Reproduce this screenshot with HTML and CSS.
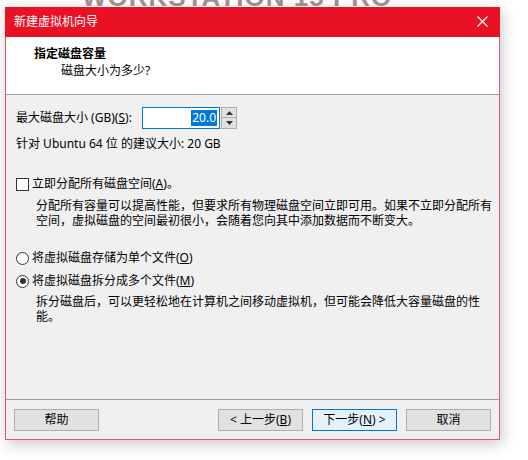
FILE: index.html
```html
<!DOCTYPE html>
<html lang="zh-CN">
<head>
<meta charset="utf-8">
<title>新建虚拟机向导</title>
<link rel="stylesheet" href="styles.css">
</head>
<body>
<div class="bg-mark">WORKSTATION 15 PRO<sup>™</sup></div>
<div class="window">
  <div class="titlebar">
    <span class="title">新建虚拟机向导</span>
    <svg class="close" width="11" height="11" viewBox="0 0 11 11"><path d="M0.5 0.5 L10.5 10.5 M10.5 0.5 L0.5 10.5" stroke="#fff" stroke-width="1.2" fill="none"/></svg>
  </div>
  <div class="header">
    <div class="h-title">指定磁盘容量</div>
    <div class="h-sub">磁盘大小为多少?</div>
  </div>
  <div class="content">
    <div class="size-row">
      <span class="size-label">最大磁盘大小 (GB)(<u>S</u>):</span>
      <div class="spin-input"><span class="sel">20.0</span></div>
      <div class="spin-btns">
        <div class="spin-btn"><svg width="7" height="4" viewBox="0 0 7 4"><path d="M0 4 L3.5 0 L7 4 Z" fill="#333"/></svg></div>
        <div class="spin-btn"><svg width="7" height="4" viewBox="0 0 7 4"><path d="M0 0 L3.5 4 L7 0 Z" fill="#333"/></svg></div>
      </div>
    </div>
    <div class="hint">针对 Ubuntu 64 位 的建议大小: 20 GB</div>
    <div class="check-row"><span class="checkbox"></span><span>立即分配所有磁盘空间(<u>A</u>)。</span></div>
    <p class="desc">分配所有容量可以提高性能，但要求所有物理磁盘空间立即可用。如果不立即分配所有空间，虚拟磁盘的空间最初很小，会随着您向其中添加数据而不断变大。</p>
    <div class="radio-row r1"><span class="radio"></span><span>将虚拟磁盘存储为单个文件(<u>O</u>)</span></div>
    <div class="radio-row r2"><span class="radio checked"></span><span>将虚拟磁盘拆分成多个文件(<u>M</u>)</span></div>
    <p class="desc desc2">拆分磁盘后，可以更轻松地在计算机之间移动虚拟机，但可能会降低大容量磁盘的性能。</p>
  </div>
  <div class="footer">
    <button class="btn">帮助</button>
    <div class="spacer"></div>
    <button class="btn">&lt; 上一步(<u>B</u>)</button>
    <button class="btn primary">下一步(<u>N</u>) &gt;</button>
    <button class="btn">取消</button>
  </div>
</div>
</body>
</html>
```

FILE: styles.css
```css
html, body {
  margin: 0;
  padding: 0;
  background: #ffffff;
}
body {
  position: relative;
  width: 528px;
  height: 460px;
  overflow: hidden;
  font-family: "Noto Sans", "Noto Sans CJK SC", sans-serif;
  font-size: 12px;
  color: #000;
}
.bg-mark {
  position: absolute;
  left: 82px;
  top: -18px;
  font-family: "Liberation Sans", sans-serif;
  font-weight: bold;
  font-size: 26px;
  letter-spacing: 1px;
  color: rgba(105, 70, 70, 0.6);
  white-space: nowrap;
}
.bg-mark sup {
  font-size: 12px;
}
.window {
  position: relative;
  margin: 7px 0 0 5px;
  width: 495px;
  height: 433px;
  box-sizing: border-box;
  border: 1px solid #e0566a;
  border-top: none;
  background: #f0f0f0;
  display: flex;
  flex-direction: column;
  box-shadow: 2px 4px 14px rgba(0, 0, 0, 0.22);
}
.titlebar {
  height: 30px;
  margin: 0 -1px;
  background: #e81224;
  display: flex;
  align-items: center;
  padding: 0 12px 0 9px;
  color: #fff;
  flex-shrink: 0;
}
.title {
  flex: 1;
  line-height: 16px;
  margin-top: -1px;
}
.close {
  display: block;
  margin-top: -1px;
}
.header {
  height: 49px;
  flex-shrink: 0;
  background: #ffffff;
  border-bottom: 1px solid #a0a0a0;
  padding-top: 8px;
  box-sizing: content-box;
}
.h-title {
  font-weight: bold;
  line-height: 18px;
  padding-left: 28px;
}
.h-sub {
  line-height: 16px;
  padding-left: 55px;
}
.content {
  height: 304px;
  flex-shrink: 0;
  box-sizing: border-box;
  padding: 12px 0 0 10px;
}
.size-row {
  display: flex;
  align-items: center;
  height: 22px;
}
.size-label {
  width: 126px;
  line-height: 16px;
}
.spin-input {
  width: 78px;
  height: 22px;
  box-sizing: border-box;
  border: 1px solid #0078d7;
  background: #fff;
  display: flex;
  justify-content: flex-end;
  align-items: center;
  padding-right: 2px;
}
.sel {
  background: #0078d7;
  color: #fff;
  line-height: 16px;
  padding: 0 1px;
}
.spin-btns {
  margin-left: 1px;
  display: flex;
  flex-direction: column;
  height: 22px;
}
.spin-btn {
  width: 16px;
  height: 11px;
  box-sizing: border-box;
  border: 1px solid #adadad;
  background: #e1e1e1;
  display: flex;
  align-items: center;
  justify-content: center;
}
.spin-btn + .spin-btn {
  border-top: none;
}
.hint {
  margin-top: 7px;
  line-height: 16px;
}
.check-row, .radio-row {
  display: flex;
  align-items: center;
  line-height: 16px;
}
.check-row {
  margin-top: 24px;
}
.checkbox {
  width: 13px;
  height: 13px;
  box-sizing: border-box;
  border: 1px solid #333;
  background: #fff;
  margin-right: 3px;
}
.desc {
  margin: 6px 0 0 20px;
  width: 460px;
  line-height: 15px;
}
.r1 {
  margin-top: 22px;
}
.r2 {
  margin-top: 7px;
}
.radio {
  width: 13px;
  height: 13px;
  box-sizing: border-box;
  border: 1px solid #333;
  border-radius: 50%;
  background: #fff;
  margin-right: 3px;
  display: flex;
  align-items: center;
  justify-content: center;
}
.radio.checked::after {
  content: "";
  width: 6px;
  height: 6px;
  border-radius: 50%;
  background: #333;
}
.desc2 {
  margin-top: 5px;
}
.footer {
  flex: 1;
  border-top: 1px solid #a0a0a0;
  display: flex;
  align-items: flex-start;
  padding: 9px 8px 0 8px;
  gap: 9px;
}
.spacer {
  flex: 1;
}
.btn {
  width: 85px;
  height: 22px;
  box-sizing: border-box;
  border: 1px solid #adadad;
  background: #e1e1e1;
  font-family: inherit;
  font-size: 12px;
  line-height: 16px;
  padding: 0;
  color: #000;
}
.btn.primary {
  border-color: #0078d7;
  background: #e5f1fb;
}
u {
  text-decoration: underline;
  text-underline-offset: 1px;
}
```
